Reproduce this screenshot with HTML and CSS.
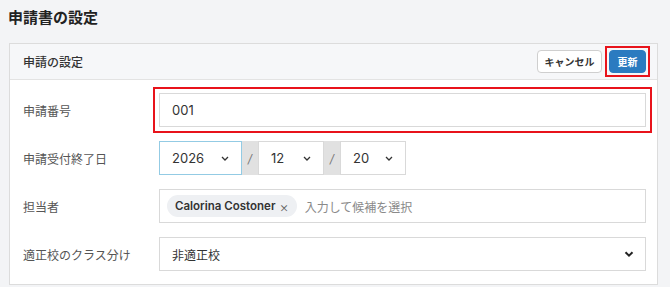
FILE: index.html
```html
<!DOCTYPE html>
<html lang="ja">
<head>
    <meta charset="UTF-8">
    <title>申請書の設定</title>
    <link rel="stylesheet" href="styles.css">
</head>
<body>
    <h1 class="page-title">申請書の設定</h1>

    <div class="card">
        <!-- ヘッダー -->
        <div class="card-header">
            <div class="card-title">申請の設定</div>
            <div class="actions">
                <button class="btn btn-cancel">キャンセル</button>
                <span class="mark-box"><button class="btn btn-primary">更新</button></span>
            </div>
        </div>

        <!-- フォーム -->
        <div class="card-body">
            <div class="row">
                <div class="label">申請番号</div>
                <div class="field">
                    <div class="input mark">001</div>
                </div>
            </div>

            <div class="row">
                <div class="label">申請受付終了日</div>
                <div class="field date">
                    <div class="select sel-year focus">
                        <span>2026</span>
                        <svg class="chev" width="8" height="5" viewBox="0 0 8 5"><polyline points="1,1 4,4 7,1" fill="none" stroke="#333" stroke-width="1.3"/></svg>
                    </div>
                    <div class="sep">/</div>
                    <div class="select sel-month">
                        <span>12</span>
                        <svg class="chev" width="8" height="5" viewBox="0 0 8 5"><polyline points="1,1 4,4 7,1" fill="none" stroke="#333" stroke-width="1.3"/></svg>
                    </div>
                    <div class="sep">/</div>
                    <div class="select sel-day">
                        <span>20</span>
                        <svg class="chev" width="8" height="5" viewBox="0 0 8 5"><polyline points="1,1 4,4 7,1" fill="none" stroke="#333" stroke-width="1.3"/></svg>
                    </div>
                </div>
            </div>

            <div class="row">
                <div class="label">担当者</div>
                <div class="field">
                    <div class="input tags">
                        <span class="tag">Calorina Costoner <span class="tag-x">×</span></span>
                        <span class="placeholder">入力して候補を選択</span>
                    </div>
                </div>
            </div>

            <div class="row">
                <div class="label">適正校のクラス分け</div>
                <div class="field">
                    <div class="select full">
                        <span>非適正校</span>
                        <svg class="chev" width="10" height="6" viewBox="0 0 10 6"><polyline points="1.5,1.2 5,4.6 8.5,1.2" fill="none" stroke="#222" stroke-width="2"/></svg>
                    </div>
                </div>
            </div>
        </div>
    </div>
</body>
</html>
```

FILE: styles.css
```css
body {
    margin: 0;
    padding: 8px 12px 0 9px;
    background: #f3f4f6;
    font-family: "Inter", "Noto Sans CJK JP", sans-serif;
    color: #333;
}
.page-title {
    font-size: 15px;
    font-weight: bold;
    line-height: 20px;
    margin: 0 0 15px -1px;
    color: #222;
}
.card {
    width: 647px;
    background: #fff;
    border: 1px solid #dcdcdc;
}
.card-header {
    display: flex;
    align-items: center;
    justify-content: space-between;
    height: 35px;
    padding: 0 9px 0 13px;
    background: #f6f7f9;
    border-bottom: 1px solid #e3e3e3;
}
.card-title {
    font-size: 12px;
    font-weight: 500;
    color: #333;
}
.actions {
    display: flex;
    align-items: center;
    gap: 5px;
}
.btn {
    height: 23px;
    padding: 0;
    border-radius: 4px;
    font-family: inherit;
    font-size: 10px;
    font-weight: bold;
    cursor: pointer;
}
.btn-cancel {
    width: 65px;
    background: #fff;
    border: 1px solid #cfcfcf;
    color: #333;
}
.btn-primary {
    display: block;
    width: 37px;
    background: #2b7bc0;
    border: 1px solid #2b7bc0;
    color: #fff;
}
/* 赤枠の注釈 */
.mark-box {
    display: block;
    padding: 2px;
    outline: 2px solid #e8131b;
}
.mark {
    outline: 2px solid #e8131b;
    outline-offset: 4px;
}
.card-body {
    padding: 13px 11px 13px 13px;
}
.row {
    display: flex;
    align-items: center;
    margin-bottom: 14px;
}
.row:last-child {
    margin-bottom: 0;
}
.label {
    width: 136px;
    font-size: 12px;
    color: #555;
}
.field {
    flex: 1;
}
.input {
    box-sizing: border-box;
    height: 34px;
    display: flex;
    align-items: center;
    padding: 0 12px;
    border: 1px solid #d9d9d9;
    font-size: 13px;
    color: #333;
    background: #fff;
}
.date {
    display: flex;
    flex: none;
}
.select {
    box-sizing: border-box;
    height: 34px;
    display: flex;
    align-items: center;
    justify-content: space-between;
    padding: 0 12px 0 12px;
    border: 1px solid #d9d9d9;
    font-size: 13px;
    background: #fff;
}
.select.focus {
    border-color: #93cbe4;
}
.sel-year {
    width: 83px;
}
.sel-month {
    width: 66px;
}
.sel-day {
    width: 66px;
}
.sep {
    width: 16px;
    height: 34px;
    box-sizing: border-box;
    display: flex;
    align-items: center;
    justify-content: center;
    background: #e1e1e1;
    color: #777;
    font-size: 12px;
    font-style: italic;
}
.select.full {
    padding-right: 11px;
    font-size: 12px;
}
.tags {
    padding-left: 7px;
    gap: 8px;
}
.tag {
    display: inline-flex;
    align-items: center;
    height: 22px;
    padding: 0 8px;
    border-radius: 11px;
    background: #eef0f3;
    font-size: 11.5px;
    font-weight: 600;
    color: #333;
}
.tag-x {
    margin-left: 4px;
    font-weight: 300;
    font-size: 14px;
    color: #666;
}
.placeholder {
    font-size: 12px;
    color: #8a8a8a;
}
```
